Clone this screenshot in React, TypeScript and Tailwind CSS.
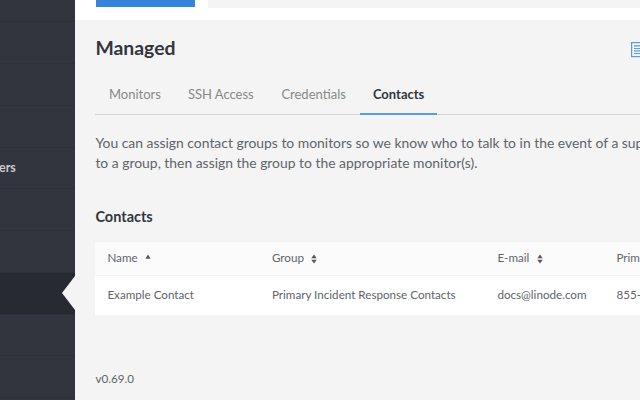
import React from "react";

const navItems = ["", "", "", "", "ers", "", "", "", "", "", ""];
const ACTIVE_ITEM = 7;

function Sidebar() {
  return (
    <aside className="relative w-[75px] shrink-0 bg-[#32363c]">
      <div className="-mt-[19.3px]">
        {navItems.map((label, i) => (
          <div
            key={i}
            className={`flex h-[41.75px] items-center border-b border-[#2e3138] text-[12.5px] font-bold text-[#c9cacb] ${
              i === ACTIVE_ITEM ? "bg-[#272a30]" : "bg-[#32353e]"
            }`}
          >
            <span className="-ml-[1px] pt-[1px]">{label}</span>
          </div>
        ))}
      </div>
      <svg className="absolute left-[62px] top-[276px]" width="13" height="34" viewBox="0 0 13 34">
        <path d="M13 0 L0 17 L13 34 Z" fill="#f4f4f4" />
      </svg>
    </aside>
  );
}

function SortIcon({ ascending = false }: { ascending?: boolean }) {
  return (
    <svg className="mt-[2px]" width="6" height="10" viewBox="0 0 6 10" fill="#55585e">
      {ascending ? (
        <path d="M3 0.6 L5.7 4.7 H0.3 Z" />
      ) : (
        <>
          <path d="M3 0.6 L5.7 4.2 H0.3 Z" />
          <path d="M3 9.4 L5.7 5.8 H0.3 Z" />
        </>
      )}
    </svg>
  );
}

function DocsIcon() {
  return (
    <svg className="shrink-0" width="20" height="16" viewBox="0 0 20 16" fill="none" stroke="#5b9be6">
      <rect x="0.6" y="0.6" width="19" height="14" strokeWidth="1.2" />
      <path d="M3 3.9H17M3 6.5H17M3 8.9H17M3 11.5H17" strokeWidth="1.2" />
    </svg>
  );
}

function Tab({ label, className }: { label: string; className: string }) {
  return <div className={`shrink-0 whitespace-nowrap ${className}`}>{label}</div>;
}

export default function App() {
  return (
    <div className="flex h-[400px] w-[640px] overflow-hidden bg-[#f4f4f4] font-[Lato,sans-serif] text-[#606469]">
      <Sidebar />
      <main className="min-w-0 flex-1 overflow-hidden">
        <header className="flex h-[20px] bg-white pl-[20.5px]">
          <div className="h-[7px] w-[99.5px] bg-[#3683dc]" />
          <div className="ml-[13px] h-[8px] flex-1 bg-[#f4f4f4]" />
        </header>
        <div className="w-[700px] pl-[20.4px]">
          <div className="flex h-[56px] pt-[16px]">
            <h1 className="w-[535.5px] text-[19.4px] font-bold leading-[24px] text-[#32363c]">Managed</h1>
            <div className="pt-[6px]">
              <DocsIcon />
            </div>
          </div>
          <nav className="flex h-[39px] border-b border-[#d2d3d4] text-[13px] leading-[36px] text-[#888888]">
            <Tab label="Monitors" className="w-[79px] pl-[13.5px]" />
            <Tab label="SSH Access" className="w-[93px] pl-[13.5px]" />
            <Tab label="Credentials" className="w-[93px] pl-[14px]" />
            <Tab label="Contacts" className="h-[39px] w-[76.5px] border-b-2 border-[#5b9be6] pl-[12.5px] font-bold text-[#32363c]" />
          </nav>
          <p className="whitespace-nowrap pb-[1px] pt-[18px] text-[13.9px] leading-[19.5px]">
            You can assign contact groups to monitors so we know who to talk to in the event of a sup
            <br />
            to a group, then assign the group to the appropriate monitor(s).
          </p>
          <h2 className="pt-[34px] text-[14.5px] font-bold leading-[20px] text-[#32363c]">Contacts</h2>
          <div className="mt-[15px] text-[11.65px]">
            <div className="flex h-[34px] items-center border-b border-[#f4f4f4] bg-[#fbfbfb] pb-[1.5px] pl-[12px]">
              <div className="flex w-[164.5px] items-center gap-[7.5px]">Name <SortIcon ascending /></div>
              <div className="flex w-[225.5px] items-center gap-[7.5px]">Group <SortIcon /></div>
              <div className="flex w-[119px] items-center gap-[7.5px]">E-mail <SortIcon /></div>
              <div>Prim</div>
            </div>
            <div className="flex h-[39px] items-center whitespace-nowrap bg-white pb-[1px] pl-[12px]">
              <div className="w-[164.5px]">Example Contact</div>
              <div className="w-[225.5px]">Primary Incident Response Contacts</div>
              <div className="w-[119px]">docs@linode.com</div>
              <div>855-</div>
            </div>
          </div>
          <footer className="pt-[55px] text-[11.65px] leading-[18px]">v0.69.0</footer>
        </div>
      </main>
    </div>
  );
}
